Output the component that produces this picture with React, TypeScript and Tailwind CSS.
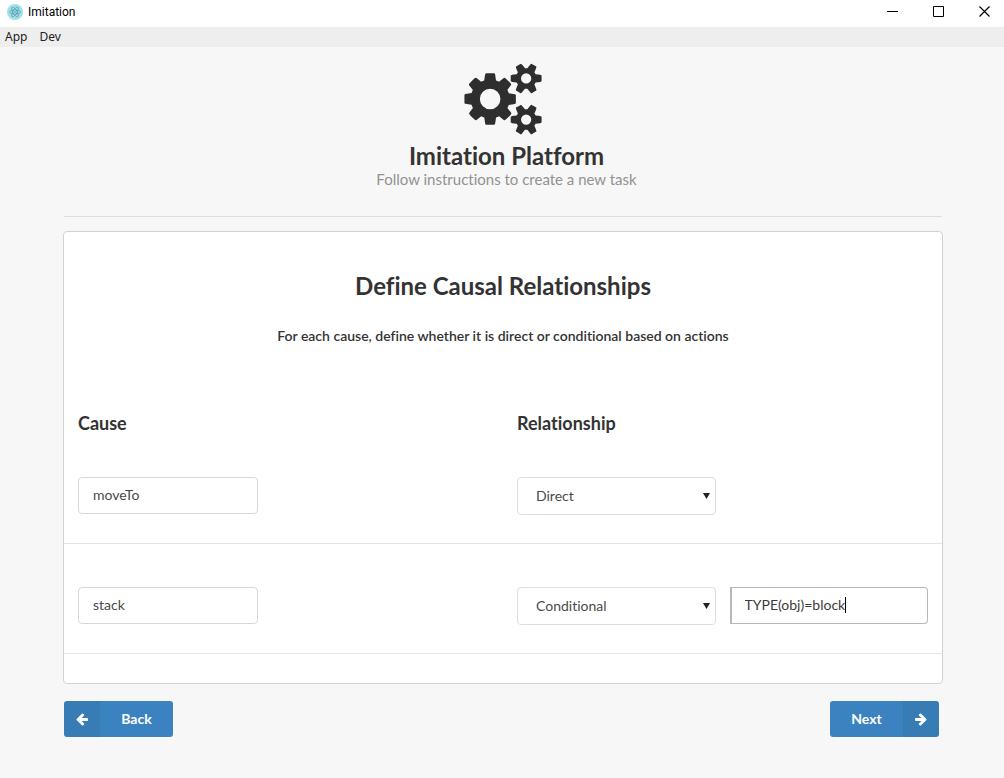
import { useState } from "react";
import type { ReactNode } from "react";

const SMALL_GEARS =
  "m640 533v140q0 16-149 31-12 27-30 52 51 113 51 138 0 4-4 7-122 71-124 71-8 0-46-47t-52-68q-20 2-30 2t-30-2q-14 21-52 68t-46 47q-2 0-124-71-4-3-4-7 0-25 51-138-18-25-30-52-149-15-149-31v-140q0-16 149-31 13-29 30-52-51-113-51-138 0-4 4-7 4-2 35-20t59-34 30-16q8 0 46 46.5t52 67.5q20-2 30-2t30 2q51-71 92-112l6-2q4 0 124 70 4 3 4 7 0 25-51 138 17 23 30 52 149 15 149 31zm0-1024v140q0 16-149 31-12 27-30 52 51 113 51 138 0 4-4 7-122 71-124 71-8 0-46-47t-52-68q-20 2-30 2t-30-2q-14 21-52 68t-46 47q-2 0-124-71-4-3-4-7 0-25 51-138-18-25-30-52-149-15-149-31v-140q0-16 149-31 13-29 30-52-51-113-51-138 0-4 4-7 4-2 35-20t59-34 30-16q8 0 46 46.5t52 67.5q20-2 30-2t30 2q51-71 92-112l6-2q4 0 124 70 4 3 4 7 0 25-51 138 17 23 30 52 149 15 149 31z";

const COGS =
  "M896 896q0-106-75-181t-181-75-181 75-75 181 75 181 181 75 181-75 75-181zm768 512q0-52-38-90t-90-38-90 38-38 90q0 53 37.5 90.5t90.5 37.5 90.5-37.5 37.5-90.5zm0-1024q0-52-38-90t-90-38-90 38-38 90q0 53 37.5 90.5t90.5 37.5 90.5-37.5 37.5-90.5zm-384 421v185q0 10-7 19.5t-16 10.5l-155 24q-11 35-32 76 34 48 90 115 7 11 7 20 0 12-7 19-23 30-82.5 89.5t-78.5 59.5q-11 0-21-7l-115-90q-37 19-77 31-11 108-23 155-7 24-30 24h-186q-11 0-20-7.5t-10-17.5l-23-153q-34-10-75-31l-118 89q-7 7-20 7-11 0-21-8-144-133-144-160 0-9 7-19 10-14 41-53t47-61q-23-44-35-82l-152-24q-10-1-17-9.5t-7-19.5v-185q0-10 7-19.5t16-10.5l155-24q11-35 32-76-34-48-90-115-7-11-7-20 0-12 7-20 22-30 82-89t79-59q11 0 21 7l115 90q34-18 77-32 11-108 23-154 7-24 30-24h186q11 0 20 7.5t10 17.5l23 153q34 10 75 31l118-89q8-7 20-7 11 0 21 8 144 133 144 160 0 8-7 19-12 16-42 54t-45 60q23 48 34 82l152 23q10 2 17 10.5t7 19.5z" +
  SMALL_GEARS;

const ARROW_LEFT =
  "M1664 896v128q0 53-32.5 90.5t-84.5 37.5h-704l293 294q38 36 38 90t-38 90l-75 76q-37 37-90 37-52 0-91-37l-651-652q-37-37-37-90 0-52 37-91l651-650q38-38 91-38 52 0 90 38l75 74q38 38 38 91t-38 91l-293 293h704q52 0 84.5 37.5t32.5 90.5z";

const ARROW_RIGHT =
  "M1600 960q0 54-37 91l-651 651q-39 37-91 37-51 0-90-37l-75-75q-38-38-38-91t38-91l293-293h-704q-52 0-84.5-37.5t-32.5-90.5v-128q0-53 32.5-90.5t84.5-37.5h704l-293-294q-38-36-38-90t38-90l75-75q38-38 90-38 53 0 91 38l651 651q37 35 37 90z";

function AppIcon() {
  return (
    <svg viewBox="0 0 32 32" className="size-4" aria-hidden="true">
      <circle cx="16" cy="16" r="16" fill="#9fe0ea" />
      <g fill="none" stroke="#4d93a3" strokeWidth="1.2">
        <ellipse cx="16" cy="16" rx="11" ry="4.2" />
        <ellipse cx="16" cy="16" rx="11" ry="4.2" transform="rotate(60 16 16)" />
        <ellipse cx="16" cy="16" rx="11" ry="4.2" transform="rotate(120 16 16)" />
      </g>
      <circle cx="16" cy="16" r="1.4" fill="#4d93a3" />
    </svg>
  );
}

function WindowButton({ label, children }: { label: string; children: ReactNode }) {
  return (
    <button type="button" aria-label={label} className="flex w-[46px] items-center justify-center pb-1 pl-[6px]">
      <svg viewBox="0 0 11 11" className="size-[11px]" fill="none" stroke="#000">
        {children}
      </svg>
    </button>
  );
}

function TitleBar() {
  return (
    <div className="flex h-[27px] items-stretch justify-between bg-white pl-[7px] text-black">
      <div className="flex items-center gap-[5px] pb-1">
        <AppIcon />
        <span className="font-[Roboto,sans-serif] text-xs">Imitation</span>
      </div>
      <div className="flex">
        <WindowButton label="Minimize">
          <path d="M0 5.5h11" />
        </WindowButton>
        <WindowButton label="Maximize">
          <path d="M.5 .5h10v10h-10z" />
        </WindowButton>
        <WindowButton label="Close">
          <path d="M.5 .5l10 10M10.5 .5l-10 10" strokeWidth="1.2" />
        </WindowButton>
      </div>
    </div>
  );
}

function RelationSelect({ label, initial }: { label: string; initial: string }) {
  return (
    <div className="relative">
      <select
        aria-label={label}
        defaultValue={initial}
        className="block h-[38px] w-full appearance-none rounded border border-[#dedede] bg-white px-[18px] text-sm text-[#4a4a4a] outline-none"
      >
        <option>Direct</option>
        <option>Conditional</option>
      </select>
      <svg viewBox="0 0 7 6" className="pointer-events-none absolute top-4 right-[6px] h-[6px] w-[7px]" aria-hidden="true">
        <path d="M0 0h7L3.5 6z" fill="#222" />
      </svg>
    </div>
  );
}

function CauseRow({ cause, relation, condition }: { cause: string; relation: string; condition?: string }) {
  const [text, setText] = useState(condition ?? "");
  return (
    <div className="grid h-[110px] grid-cols-2 items-start border-b border-[#e4e4e4] pt-[43px]">
      <div className="px-[14px]">
        <input
          aria-label="Cause"
          defaultValue={cause}
          className="block h-[37px] w-[180px] rounded border border-[#d8d8d8] bg-white px-[14px] pb-0.5 text-sm text-[#4a4a4a] outline-none"
        />
      </div>
      <div className="grid grid-cols-2 gap-[14px] px-[14px]">
        <RelationSelect label={`Relationship of ${cause}`} initial={relation} />
        {condition !== undefined && (
          <div className="relative">
            <input
              aria-label={`Condition of ${cause}`}
              value={text}
              onChange={(e) => setText(e.target.value)}
              className="block h-[37px] w-full rounded-r border border-l-2 border-[#b8b8b8] bg-white px-[13px] pb-0.5 text-sm text-[#3c3c3c] caret-transparent outline-none"
            />
            <div className="pointer-events-none absolute inset-y-0 left-[15px] flex items-center pb-0.5 text-sm" aria-hidden="true">
              <span className="h-4 border-r border-black leading-4 text-transparent">{text}</span>
            </div>
          </div>
        )}
      </div>
    </div>
  );
}

function NavIcon({ path }: { path: string }) {
  return (
    <span className="flex h-full w-9 items-center justify-center bg-black/5">
      <svg viewBox="0 0 1792 1792" className="size-[14px]" fill="currentColor" aria-hidden="true">
        <path d={path} />
      </svg>
    </span>
  );
}

export default function App() {
  return (
    <div className="min-h-screen bg-[#f7f7f7] font-[Lato,sans-serif] text-[#333333] [font-variant-ligatures:no-common-ligatures]">
      <div className="font-['Noto_Sans',sans-serif]">
        <TitleBar />
        <nav className="flex h-5 items-center gap-3 bg-[#eeeeee] px-[5px] text-xs text-[#222]">
          <button type="button">App</button>
          <button type="button">Dev</button>
        </nav>
      </div>

      <main className="mr-[61px] ml-[63px] pt-4">
        <header className="mx-px flex flex-col items-center border-b border-[#dddddd] pb-[27px]">
          <svg viewBox="0 0 1920 1792" className="h-[72px] w-[78px]" fill="#2e2e2e" aria-hidden="true">
            <path d={COGS} />
          </svg>
          <div className="mt-2 pl-[7px] text-center">
            <h1 className="text-2xl leading-[26px] font-bold">Imitation Platform</h1>
            <p className="text-[15px] leading-5 text-[#929292]">Follow instructions to create a new task</p>
          </div>
        </header>

        <section className="mt-[14px] rounded border border-[#d2d2d2] bg-white pt-[39px] pb-[29px]">
          <h2 className="text-center text-2xl leading-[30px] font-bold">Define Causal Relationships</h2>
          <p className="mt-[25px] text-center text-sm leading-5 font-semibold">
            For each cause, define whether it is direct or conditional based on actions
          </p>
          <div className="mt-[66px] grid grid-cols-2 text-lg leading-[22px] font-bold">
            <h3 className="px-[14px]">Cause</h3>
            <h3 className="px-[14px]">Relationship</h3>
          </div>
          <CauseRow cause="moveTo" relation="Direct" />
          <CauseRow cause="stack" relation="Conditional" condition="TYPE(obj)=block" />
        </section>

        <footer className="mt-[17px] flex justify-between pr-1 pl-px text-sm font-bold text-white">
          <button type="button" className="flex h-9 w-[109px] items-center overflow-hidden rounded-[3px] bg-[#3b83c0]">
            <NavIcon path={ARROW_LEFT} />
            <span className="flex-1">Back</span>
          </button>
          <button type="button" className="flex h-9 w-[109px] items-center overflow-hidden rounded-[3px] bg-[#3b83c0]">
            <span className="flex-1">Next</span>
            <NavIcon path={ARROW_RIGHT} />
          </button>
        </footer>
      </main>
    </div>
  );
}
